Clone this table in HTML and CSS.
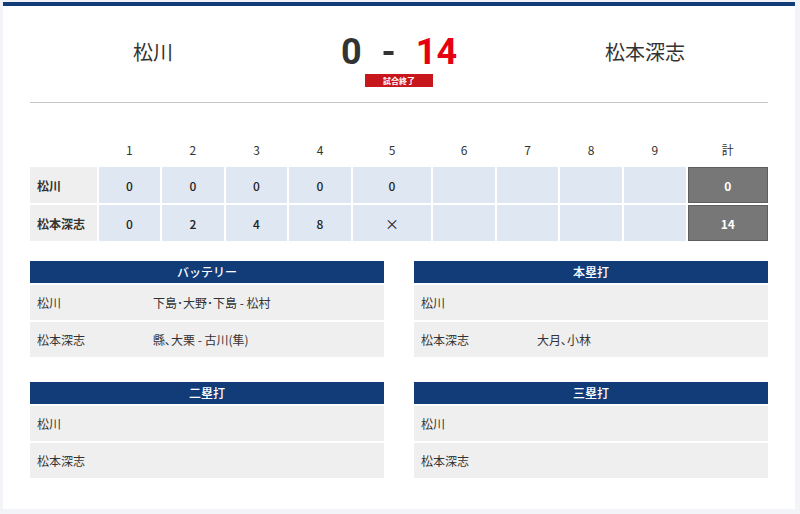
FILE: index.html
```html
<!DOCTYPE html>
<html lang="ja">
<head>
<meta charset="utf-8">
<title>試合結果</title>
<link rel="stylesheet" href="styles.css">
</head>
<body>
<div class="page">
  <div class="card">
    <div class="match">
      <div class="team">松川</div>
      <div class="center">
        <div class="score">
          <span class="num">0</span>
          <span class="dash">-</span>
          <span class="num win">14</span>
        </div>
        <div class="badge">試合終了</div>
      </div>
      <div class="team">松本深志</div>
    </div>
    <div class="divider"></div>

    <div class="board">
      <div class="hd"></div>
      <div class="hd">1</div><div class="hd">2</div><div class="hd">3</div><div class="hd">4</div><div class="hd">5</div>
      <div class="hd">6</div><div class="hd">7</div><div class="hd">8</div><div class="hd">9</div><div class="hd">計</div>

      <div class="nm">松川</div>
      <div class="inn">0</div><div class="inn">0</div><div class="inn">0</div><div class="inn">0</div><div class="inn">0</div>
      <div class="inn"></div><div class="inn"></div><div class="inn"></div><div class="inn"></div>
      <div class="tot">0</div>

      <div class="nm">松本深志</div>
      <div class="inn">0</div><div class="inn">2</div><div class="inn">4</div><div class="inn">8</div><div class="inn x">×</div>
      <div class="inn"></div><div class="inn"></div><div class="inn"></div><div class="inn"></div>
      <div class="tot">14</div>
    </div>

    <div class="info">
      <div class="box">
        <div class="box-hd">バッテリー</div>
        <div class="row"><span class="k">松川</span><span class="v">下島･大野･下島 - 松村</span></div>
        <div class="row"><span class="k">松本深志</span><span class="v">縣､大栗 - 古川(隼)</span></div>
      </div>
      <div class="box">
        <div class="box-hd">本塁打</div>
        <div class="row"><span class="k">松川</span><span class="v"></span></div>
        <div class="row"><span class="k">松本深志</span><span class="v">大月､小林</span></div>
      </div>
      <div class="box">
        <div class="box-hd">二塁打</div>
        <div class="row"><span class="k">松川</span><span class="v"></span></div>
        <div class="row"><span class="k">松本深志</span><span class="v"></span></div>
      </div>
      <div class="box">
        <div class="box-hd">三塁打</div>
        <div class="row"><span class="k">松川</span><span class="v"></span></div>
        <div class="row"><span class="k">松本深志</span><span class="v"></span></div>
      </div>
    </div>
  </div>
</div>
</body>
</html>
```

FILE: styles.css
```css
* { box-sizing: border-box; }
html, body { margin: 0; padding: 0; }
body {
  background: #f3f4f7;
  font-family: "Noto Sans CJK JP", "Noto Sans", sans-serif;
  color: #333;
}
.page {
  padding: 2px 5px 5px 3px;
}
.card {
  background: #fff;
  border-top: 4px solid #123c78;
  height: 507px;
  padding: 0 27px 0 27px;
}
.match {
  display: grid;
  grid-template-columns: 1fr 1fr 1fr;
  padding-top: 26px;
  padding-bottom: 15px;
}
.team {
  text-align: center;
  font-size: 20px;
  line-height: 40px;
  color: #333;
}
.center {
  display: flex;
  flex-direction: column;
  align-items: center;
}
.score {
  display: flex;
  justify-content: center;
  gap: 20px;
  font-family: Roboto, "Liberation Sans", sans-serif;
  font-weight: 700;
  font-size: 36px;
  line-height: 40px;
  height: 40px;
  color: #333;
}
.score .win { color: #e60012; }
.badge {
  margin-top: 2px;
  width: 68px;
  height: 13px;
  background: #c8161d;
  color: #fff;
  font-size: 8px;
  font-weight: 700;
  line-height: 13px;
  text-align: center;
}
.divider {
  height: 1px;
  background: #c4c4c4;
}
.board {
  margin-top: 30px;
  display: grid;
  grid-template-columns: 67fr 62fr 62fr 62fr 62fr 79fr 62fr 62fr 62fr 62fr 81fr;
  grid-template-rows: 32px 36px 36px;
  gap: 2px;
  font-size: 12px;
}
.board > div {
  display: flex;
  align-items: center;
  justify-content: center;
}
.hd { color: #333; }
.nm {
  background: #efefef;
  font-weight: 700;
  justify-content: flex-start !important;
  padding-left: 7px;
  color: #333;
}
.inn {
  background: #dfe7f3;
  font-weight: 500;
  color: #222;
}
.inn.x { font-weight: 400; font-size: 14px; }
.tot {
  background: #777;
  border: 1px solid #5e5e5e;
  color: #fff;
  font-weight: 700;
}
.info {
  margin-top: 20px;
  display: grid;
  grid-template-columns: 1fr 1fr;
  column-gap: 30px;
  row-gap: 25px;
}
.box {
  display: flex;
  flex-direction: column;
  gap: 2px;
}
.box-hd {
  height: 22px;
  background: #123c78;
  color: #fff;
  font-size: 12px;
  font-weight: 500;
  line-height: 22px;
  text-align: center;
}
.row {
  height: 35px;
  background: #efefef;
  display: grid;
  grid-template-columns: 123px 1fr;
  align-items: center;
  font-size: 12px;
  color: #333;
}
.row .k { padding-left: 7px; }
```
